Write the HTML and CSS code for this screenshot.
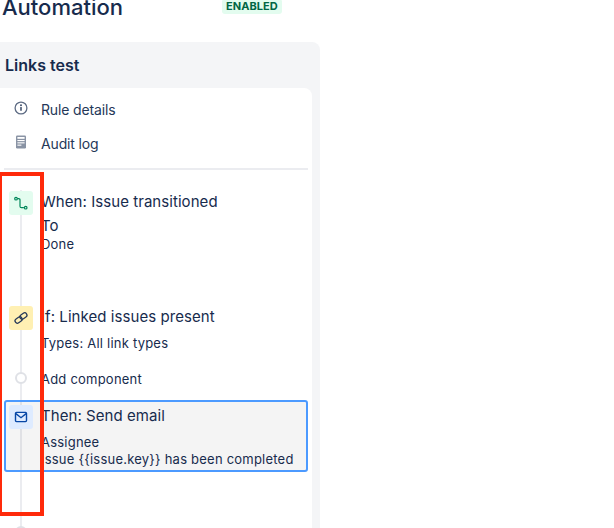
FILE: index.html
```html
<!DOCTYPE html>
<html lang="en">
<head>
<meta charset="utf-8">
<title>Automation</title>
<link rel="stylesheet" href="styles.css">
</head>
<body>
<header class="page-header">
  <h1 class="page-title">Automation</h1>
  <span class="lozenge">ENABLED</span>
</header>
<section class="panel">
  <h2 class="panel-title">Links test</h2>
  <div class="card">
    <nav class="nav">
      <a class="nav-item">
        <svg class="nav-icon" viewBox="0 0 16 16" width="16" height="16"><circle cx="8" cy="8" r="5.9" fill="none" stroke="#5e6c84" stroke-width="1.3"/><rect x="7.2" y="7" width="1.6" height="3.8" rx=".4" fill="#42526e"/><circle cx="8" cy="5.3" r="1" fill="#42526e"/></svg>
        <span>Rule details</span>
      </a>
      <a class="nav-item">
        <svg class="nav-icon" viewBox="0 0 16 16" width="16" height="16"><rect x="3" y="1.5" width="10" height="13" rx="1.2" fill="#8993a4"/><rect x="4.4" y="3" width="7.2" height="1.8" fill="#fff"/><rect x="4.4" y="6" width="7.2" height="1.1" fill="#fff"/><rect x="4.4" y="8.3" width="7.2" height="1.1" fill="#fff"/><rect x="4.4" y="10.6" width="4" height="1.1" fill="#fff"/></svg>
        <span>Audit log</span>
      </a>
    </nav>
    <hr class="divider">
    <div class="timeline">
      <div class="step step-when">
        <span class="node node-green">
          <svg viewBox="0 0 16 16" width="16" height="16" fill="none" stroke="#00875a" stroke-width="1.2"><circle cx="3" cy="3.7" r="1.3"/><circle cx="12.7" cy="12.7" r="1.3"/><path d="M4.3 3.7h1.5c.8 0 1.2.4 1.2 1.2v6.3c0 .9.5 1.5 1.4 1.5h2.5"/></svg>
        </span>
        <div class="step-body">
          <div class="step-title">When: Issue transitioned</div>
          <div class="step-title step-sub">To</div>
          <div class="step-text step-done">Done</div>
        </div>
      </div>
      <div class="step step-if">
        <span class="node node-yellow">
          <svg viewBox="0 0 16 16" width="16" height="16" fill="none" stroke="#253858" stroke-width="1.25"><rect x="6.6" y="3.7" width="7.6" height="4.6" rx="2.3" transform="rotate(-35 10.4 6)"/><rect x="1.8" y="7.7" width="7.6" height="4.6" rx="2.3" transform="rotate(-35 5.6 10)"/></svg>
        </span>
        <div class="step-body">
          <div class="step-title">If: Linked issues present</div>
          <div class="step-text step-types">Types: All link types</div>
        </div>
      </div>
      <div class="step step-add">
        <span class="node-slot"><span class="add-dot"></span></span>
        <div class="step-text step-add-label">Add component</div>
      </div>
      <div class="step step-then">
        <span class="node node-blue">
          <svg viewBox="0 0 16 16" width="16" height="16" fill="none" stroke="#0747a6" stroke-width="1.4"><rect x="2.5" y="3.4" width="11" height="9.2" rx="1"/><path d="M2.9 4.6 8 8.7l5.1-4.1"/></svg>
        </span>
        <div class="step-body">
          <div class="step-title">Then: Send email</div>
          <div class="step-text step-assignee">Assignee</div>
          <div class="step-text">Issue {{issue.key}} has been completed</div>
        </div>
      </div>
      <div class="step step-next">
        <span class="node-slot"><span class="add-dot"></span></span>
      </div>
    </div>
  </div>
</section>
<div class="highlight"></div>
</body>
</html>
```
FILE: styles.css
```css
* { box-sizing: border-box; }
html, body { margin: 0; height: 528px; overflow: hidden; background: #fff; }
body { font-family: Inter, "Liberation Sans", sans-serif; color: #172b4d; position: relative; }
.page-header { display: flex; align-items: flex-start; height: 33px; margin-top: -9px; margin-bottom: 18px; padding-left: 2px; }
.page-title { margin: 0; width: 220px; font-size: 22px; line-height: 32px; font-weight: 500; }
.lozenge { margin-top: 8px; height: 15px; padding: 0 4px; border-radius: 3px; background: #e3fcef; color: #006644; font-size: 11px; line-height: 15px; font-weight: 700; letter-spacing: .05px; }
.panel { width: 320px; height: 486px; background: #f4f5f7; border-radius: 0 8px 0 0; }
.panel-title { margin: 0; padding: 13px 0 0 5px; height: 46px; font-size: 16px; line-height: 20px; font-weight: 600; }
.card { width: 312px; height: 440px; background: #fff; border-radius: 0 8px 0 0; overflow: hidden; }
.nav { display: flex; flex-direction: column; padding-top: 4px; }
.nav-item { display: flex; align-items: center; gap: 12px; height: 34px; padding-left: 13px; font-size: 14px; letter-spacing: -.15px; color: #253858; }
.nav-icon { flex: none; margin-top: -2px; }
.divider { margin: 8px 4px 0; border: 0; height: 2px; background: #ebecf0; }
.timeline { position: relative; height: 358px; overflow: hidden; }
.timeline::before { content: ""; position: absolute; left: 20px; top: 20px; bottom: 0; width: 2px; background: #ebecf0; }
.step { position: relative; display: flex; gap: 8px; margin: 0 4px; padding-left: 3px; border: 2px solid transparent; }
.step-when { height: 115px; padding-top: 19px; }
.step-if { height: 82px; padding-top: 19px; }
.node { flex: none; width: 24px; height: 24px; border-radius: 3px; display: flex; align-items: center; justify-content: center; }
.node-green { background: #e3fcef; }
.node-yellow { background: #fff0b3; }
.node-blue { background: #deebff; }
.node-slot { flex: none; width: 24px; display: flex; align-items: center; justify-content: center; }
.add-dot { width: 12px; height: 12px; border-radius: 50%; border: 2px solid #dfe1e6; background: #fff; }
.step-body { min-width: 0; padding-top: 1px; }
.step-title { font-size: 15px; line-height: 20px; letter-spacing: .06px; color: #172b4d; }
.step-sub { margin-top: 4px; }
.step-text { font-size: 13px; line-height: 18px; letter-spacing: .22px; color: #172b4d; }
.step-done { margin-top: -1px; }
.step-types { margin-top: 7px; }
.step-add { height: 22px; align-items: center; }
.step-add-label { margin-top: 2px; }
.step-then { margin-top: 11px; height: 72px; padding-top: 3px; background: rgba(0, 0, 0, .045); border-color: #4c9aff; border-radius: 3px; }
.step-assignee { margin-top: 8px; line-height: 16px; }
.step-next { height: 22px; margin-top: 49px; align-items: center; }
.highlight { position: absolute; left: -2px; top: 172px; width: 46px; height: 344px; border: 4px solid #ff2a0a; }
```
